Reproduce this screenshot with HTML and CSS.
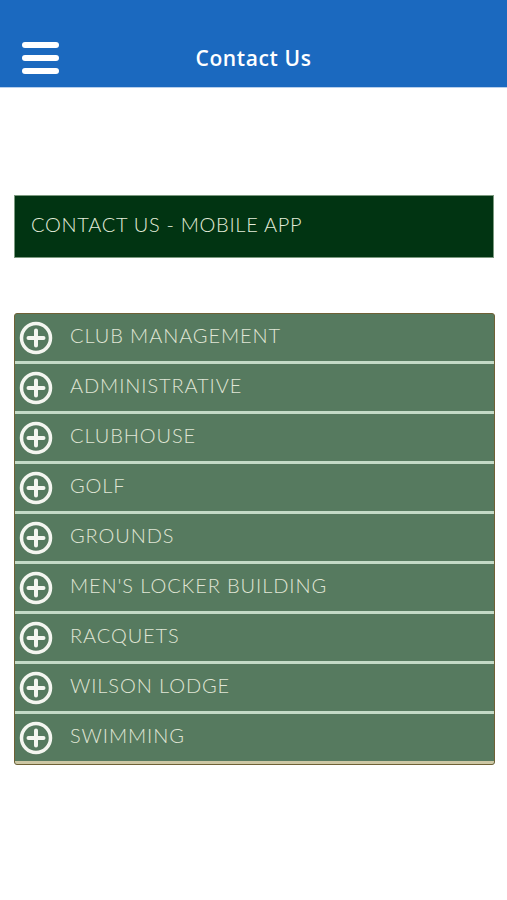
FILE: index.html
```html
<!DOCTYPE html>
<html lang="en">
<head>
    <meta charset="UTF-8">
    <meta name="viewport" content="width=device-width, initial-scale=1.0">
    <title>Contact Us</title>
    <link rel="stylesheet" href="styles.css">
</head>
<body>
    <header class="topbar">
        <div class="menu-btn">
            <span></span>
            <span></span>
            <span></span>
        </div>
        <h1>Contact Us</h1>
    </header>

    <div class="banner">CONTACT US - MOBILE APP</div>

    <div class="accordion">
        <div class="row"><svg class="plus" viewBox="0 0 34 34"><circle cx="17" cy="17" r="14.5"/><path d="M17 9.5v15M9.5 17h15"/></svg><span>CLUB MANAGEMENT</span></div>
        <div class="row"><svg class="plus" viewBox="0 0 34 34"><circle cx="17" cy="17" r="14.5"/><path d="M17 9.5v15M9.5 17h15"/></svg><span>ADMINISTRATIVE</span></div>
        <div class="row"><svg class="plus" viewBox="0 0 34 34"><circle cx="17" cy="17" r="14.5"/><path d="M17 9.5v15M9.5 17h15"/></svg><span>CLUBHOUSE</span></div>
        <div class="row"><svg class="plus" viewBox="0 0 34 34"><circle cx="17" cy="17" r="14.5"/><path d="M17 9.5v15M9.5 17h15"/></svg><span>GOLF</span></div>
        <div class="row"><svg class="plus" viewBox="0 0 34 34"><circle cx="17" cy="17" r="14.5"/><path d="M17 9.5v15M9.5 17h15"/></svg><span>GROUNDS</span></div>
        <div class="row"><svg class="plus" viewBox="0 0 34 34"><circle cx="17" cy="17" r="14.5"/><path d="M17 9.5v15M9.5 17h15"/></svg><span>MEN'S LOCKER BUILDING</span></div>
        <div class="row"><svg class="plus" viewBox="0 0 34 34"><circle cx="17" cy="17" r="14.5"/><path d="M17 9.5v15M9.5 17h15"/></svg><span>RACQUETS</span></div>
        <div class="row"><svg class="plus" viewBox="0 0 34 34"><circle cx="17" cy="17" r="14.5"/><path d="M17 9.5v15M9.5 17h15"/></svg><span>WILSON LODGE</span></div>
        <div class="row last"><svg class="plus" viewBox="0 0 34 34"><circle cx="17" cy="17" r="14.5"/><path d="M17 9.5v15M9.5 17h15"/></svg><span>SWIMMING</span></div>
    </div>
</body>
</html>
```
FILE: styles.css
```css
body {
    margin: 0;
    font-family: Lato, "Liberation Sans", sans-serif;
    background: #fff;
}

.topbar {
    height: 88px;
    box-sizing: border-box;
    padding-top: 28px;
    background: #1b69bf;
    border-bottom: 1px solid #b8d0ec;
    display: flex;
    align-items: center;
    position: relative;
}

.menu-btn {
    display: flex;
    flex-direction: column;
    gap: 7px;
    margin-left: 22px;
}

.menu-btn span {
    display: block;
    width: 37px;
    height: 6px;
    border-radius: 3px;
    background: #fff;
}

.topbar h1 {
    position: absolute;
    left: 0;
    right: 0;
    top: 58px;
    margin: 0;
    transform: translateY(-50%);
    text-align: center;
    font-family: "Open Sans", sans-serif;
    font-weight: 600;
    font-size: 21px;
    letter-spacing: 0.6px;
    color: #fff;
    pointer-events: none;
}

.banner {
    margin: 107px 13px 0 14px;
    height: 63px;
    box-sizing: border-box;
    border: 1px solid #7c9a80;
    background: #013412;
    color: #e3ecda;
    font-size: 20px;
    font-weight: 300;
    letter-spacing: 0.7px;
    display: flex;
    align-items: center;
    padding: 0 0 5px 16px;
}

.accordion {
    margin: 55px 12px 0 14px;
    border: 1px solid #6f6136;
    border-radius: 3px;
    background: #567a5f;
    overflow: hidden;
}

.row {
    height: 50px;
    box-sizing: border-box;
    border-bottom: 3px solid #c3dac6;
    display: flex;
    align-items: center;
    padding-left: 4px;
    color: #e0e6d6;
    font-size: 20px;
    font-weight: 300;
    letter-spacing: 0.9px;
}

.row span {
    margin-top: -6px;
}

.row.last {
    border-bottom-color: #cdc7a4;
}

.plus {
    width: 34px;
    height: 34px;
    margin-right: 17px;
    fill: none;
    stroke: #f4f6f0;
}

.plus circle {
    stroke-width: 3.5;
}

.plus path {
    stroke-width: 4;
    stroke-linecap: round;
}
```
